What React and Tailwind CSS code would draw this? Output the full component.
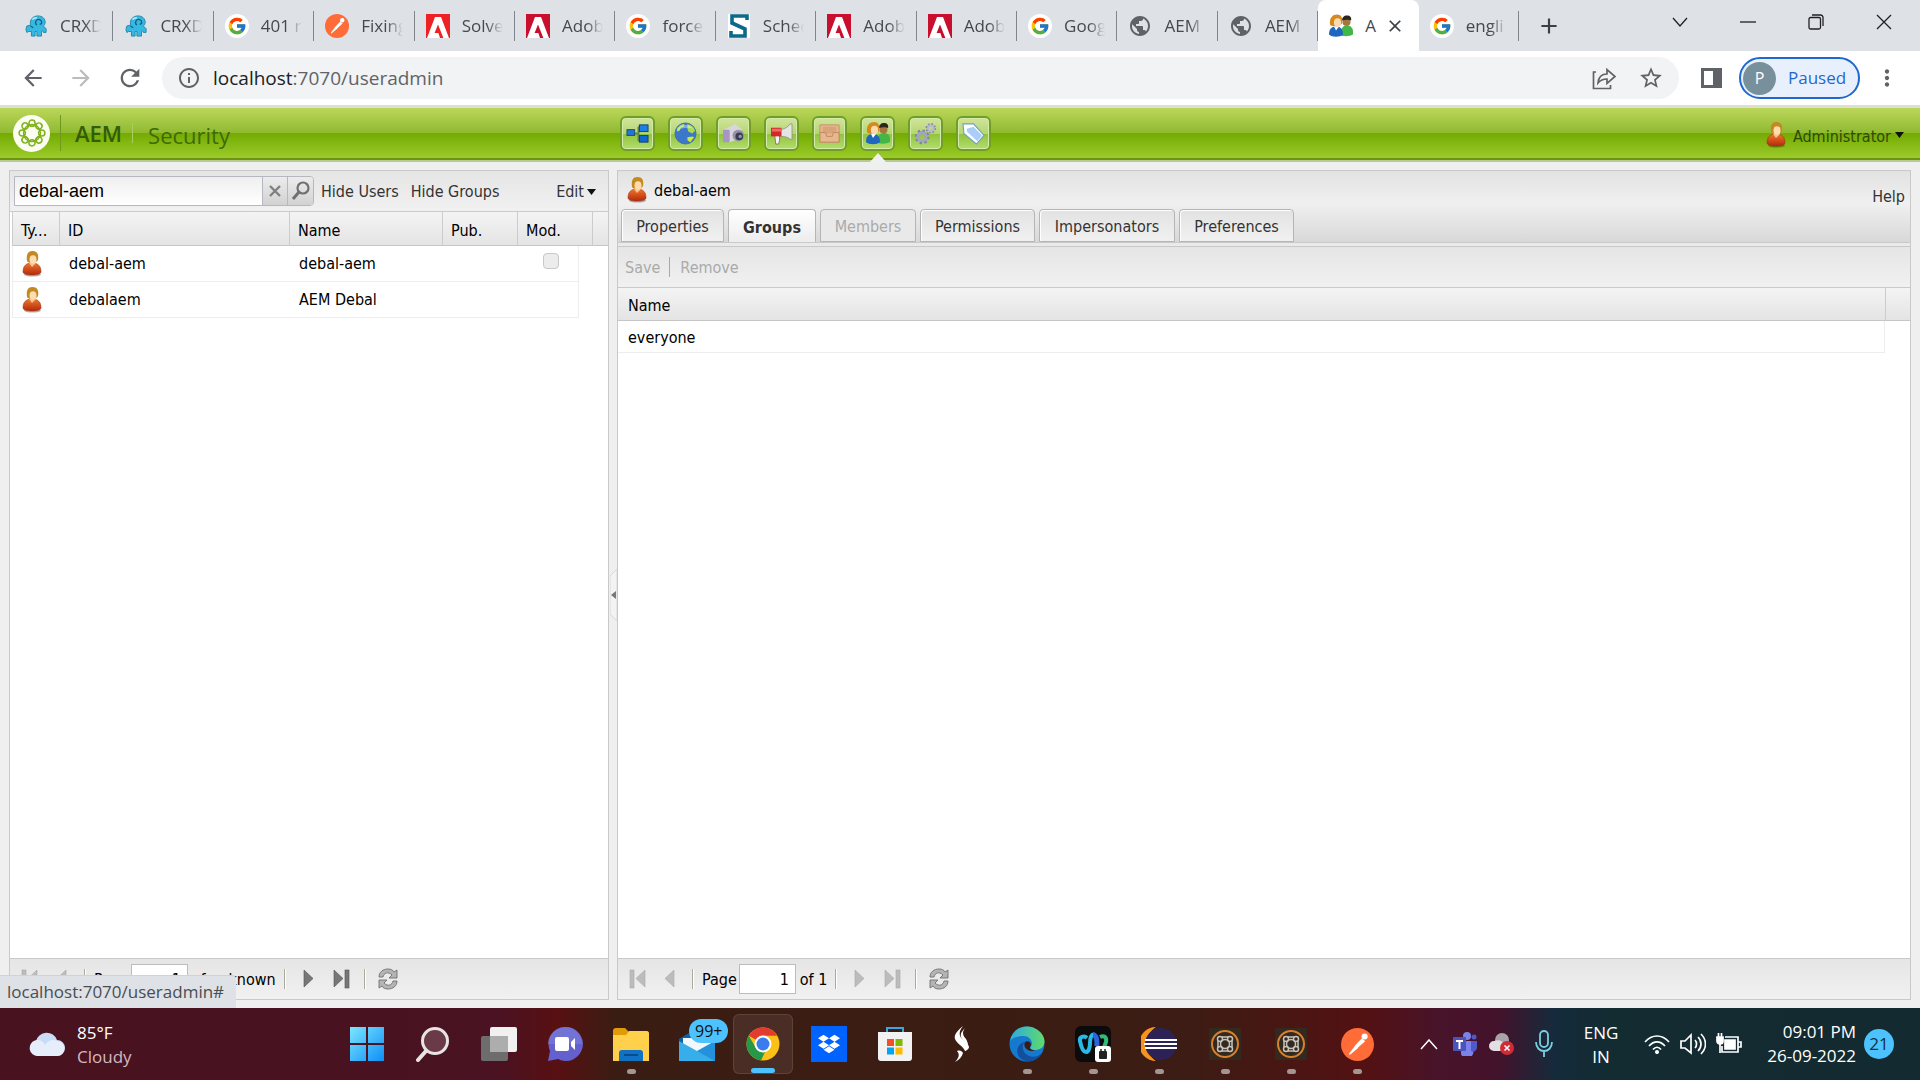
import React from 'react';
import { FcGoogle } from 'react-icons/fc';
import { MdPublic, MdArrowBack, MdArrowForward, MdRefresh, MdInfoOutline, MdStarBorder, MdMoreVert, MdAdd, MdClose } from 'react-icons/md';
import { SiDropbox } from 'react-icons/si';

/* ---------- favicons and shared icons ---------- */

const GoogleIcon = () => (
    <span className="w-6 h-6 rounded-full bg-white flex items-center justify-center">
        <FcGoogle size={20} />
    </span>
);

const CrxIcon = () => (
    <svg width="22" height="22" viewBox="0 0 24 24">
        <path d="M6 10C5 5 9 1 14 1c5 0 8 3 8 7 0 2-1 3-2 4l3 3v4h-3l-1-2-1 1v5h-5v-5h-2v5H7v-5H4l-2 1-1-3 1-4 4-1z" fill="#35b9e2" stroke="#1c86ab" strokeWidth="1" />
        <path d="M13 11c-3-2-1-7 3-6 3 1 3 5 0 5M6 12l3 2" fill="none" stroke="#135f80" strokeWidth="1.4" />
        <path d="M8 5c1-1 3-2 5-2" fill="none" stroke="#b9effc" strokeWidth="1.500" />
    </svg>
);

const PostmanIcon = ({ size = 24 }) => (
    <svg width={size} height={size} viewBox="0 0 24 24">
        <circle cx="12" cy="12" r="12" fill="#ff6c37" />
        <circle cx="17.2" cy="6.2" r="2.2" fill="#fff" />
        <path d="M15.2 7.4l2.4 2.2-5.2 5-5.6 4.6-1 .2.4-1.2 4.6-6z" fill="#fff" />
        <path d="M9.5 11.5l5.2-3.8M12.4 14.4l4.4-3.6" stroke="#ff6c37" strokeWidth=".5" />
    </svg>
);

const AdobeIcon = ({ color = '#c8102e' }) => (
    <svg width="24" height="24" viewBox="0 0 24 24">
        <rect width="24" height="24" fill={color} />
        <path d="M9 3h6l8 21h-5.6L12 10.5 8.6 19h3.8l1.6 5H1z" fill="#fff" />
    </svg>
);

const ScheduleIcon = () => (
    <svg width="22" height="24" viewBox="0 0 22 24">
        <rect width="22" height="24" fill="#fff" />
        <path d="M19 6V2H4v7l13 6v7H3v-5" fill="none" stroke="#0b6a88" strokeWidth="3.6" />
    </svg>
);

const GlobeIcon = () => <MdPublic size={26} color="#5f6368" />;

const PeopleIcon = ({ size = 25 }) => (
    <svg width={size} height={size} viewBox="0 0 24 24">
        <path d="M12 22v-4c0-3 2-6 6-6s6 3 6 6v3c-3 2-9 2-12 1z" fill="#43b649" />
        <circle cx="17.5" cy="8.500" r="4" fill="#a8763c" />
        <path d="M13 7c0-3 2-5 5-5s5 2 4 5c-2-1-6-1-9 0z" fill="#2b2620" />
        <path d="M0 21c0-5 2-8 7-8s7 3 7 8c-3 3-11 3-14 0z" fill="#1f66c1" />
        <path d="M5 13l2 4 3-4z" fill="#fff" />
        <path d="M1 11C0 4 4 1 8 1s6 3 5 9c-1 2-11 4-12 1z" fill="#d68a1e" />
        <ellipse cx="8.500" cy="9" rx="3.600" ry="4.300" fill="#ffd9ae" />
    </svg>
);

const UserIcon = () => (
    <svg width="20" height="26" viewBox="0 0 20 26">
        <defs>
            <linearGradient id="robe" x1="0" y1="0" x2="0" y2="1">
                <stop offset="0" stopColor="#f0762b" />
                <stop offset="1" stopColor="#b32a0c" />
            </linearGradient>
        </defs>
        <ellipse cx="10.500" cy="23.500" rx="8.500" ry="2" fill="#000" opacity=".3" />
        <path d="M1 21c0-6 3-9 9-9s9 3 9 9c0 4-18 4-18 0z" fill="url(#robe)" stroke="#a3330f" strokeWidth=".6" />
        <path d="M7 12l3 4 4-4-1-3H8z" fill="#f7c48d" />
        <path d="M5 10C4 3 6 0 10.500 0S17 3 16 9c-1 3-10 4-11 1z" fill="#c28a21" />
        <ellipse cx="11" cy="8.500" rx="3.500" ry="4.300" fill="#ffdcae" />
    </svg>
);

const Ring = ({ color, className }) => (
    <svg viewBox="0 0 36 36" className={className}>
        {[0, 45, 90, 135, 180, 225, 270, 315].map((a) => (
            <circle key={a} cx="18" cy="7" r="3.500" fill="none" stroke={color} strokeWidth="1.700" transform={`rotate(${a} 18 18)`} />
        ))}
        <circle cx="18" cy="18" r="9.500" fill="none" stroke={color} strokeWidth="1.700" />
    </svg>
);

const Caret = () => (
    <svg width="9" height="6" viewBox="0 0 9 6">
        <path d="M0 0h9L4.500 6z" fill="#111" />
    </svg>
);

/* ---------- browser chrome ---------- */

const tabs = [
    { title: 'CRXD', icon: <CrxIcon /> },
    { title: 'CRXD', icon: <CrxIcon /> },
    { title: '401 r', icon: <GoogleIcon /> },
    { title: 'Fixing', icon: <PostmanIcon /> },
    { title: 'Solve', icon: <AdobeIcon color="#ed2224" /> },
    { title: 'Adob', icon: <AdobeIcon /> },
    { title: 'force', icon: <GoogleIcon /> },
    { title: 'Sched', icon: <ScheduleIcon /> },
    { title: 'Adob', icon: <AdobeIcon /> },
    { title: 'Adob', icon: <AdobeIcon /> },
    { title: 'Goog', icon: <GoogleIcon /> },
    { title: 'AEM', icon: <GlobeIcon /> },
    { title: 'AEM', icon: <GlobeIcon /> },
    { title: 'A', icon: <PeopleIcon />, active: true },
    { title: 'engli', icon: <GoogleIcon /> },
];

const BrowserTab = ({ title, icon, active }) => (
    <div className={active ? 'flex-1 min-w-0 h-full flex items-center pl-[11px] bg-white rounded-t-lg' : 'flex-1 min-w-0 h-full flex items-center pl-[11px]'}>
        <span className="w-6 h-6 shrink-0 flex items-center justify-center">{icon}</span>
        <span className={active
            ? 'w-3 ml-3 shrink-0 overflow-hidden whitespace-nowrap text-[17px] text-[#45494d]'
            : 'flex-1 ml-3 mr-[11px] overflow-hidden whitespace-nowrap text-[17px] text-[#45494d] [mask-image:linear-gradient(to_right,black_60%,transparent)]'}
        >
            {title}
        </span>
        {active
            ? <button aria-label="Close tab" className="ml-2 text-[#3c4043]"><MdClose size={20} /></button>
            : <span className="w-px h-[30px] bg-[#80868b]"></span>}
    </div>
);

const TabStrip = () => (
    <div className="h-[51px] bg-[#dee1e6] flex items-center pl-[13px] pr-[2px]">
        <div className="flex-1 max-w-[1506px] h-full flex">
            {tabs.map((t, i) => <BrowserTab key={i} {...t} />)}
        </div>
        <button aria-label="New tab" className="ml-[17px] text-[#3c4043]"><MdAdd size={26} /></button>
        <div className="ml-auto self-start flex h-11 text-[#202124]">
            <button aria-label="Search tabs" className="w-[68px] flex items-center justify-center">
                <svg width="16" height="10" viewBox="0 0 16 10" fill="none" stroke="currentColor" strokeWidth="1.3"><path d="M1 1l7 8 7-8" /></svg>
            </button>
            <button aria-label="Minimize" className="w-[68px] flex items-center justify-center">
                <svg width="16" height="10" viewBox="0 0 16 10" stroke="currentColor" strokeWidth="1.3"><path d="M0 5h16" /></svg>
            </button>
            <button aria-label="Restore" className="w-[68px] flex items-center justify-center">
                <svg width="16" height="16" viewBox="0 0 16 16" fill="none" stroke="currentColor" strokeWidth="1.3">
                    <rect x="1" y="3.500" width="11.500" height="11.500" rx="1.500" />
                    <path d="M4 1h8.500A2.500 2.500 0 0 1 15 3.500V12" />
                </svg>
            </button>
            <button aria-label="Close" className="w-[68px] flex items-center justify-center">
                <svg width="16" height="16" viewBox="0 0 16 16" stroke="currentColor" strokeWidth="1.3"><path d="M1 1l14 14M15 1L1 15" /></svg>
            </button>
        </div>
    </div>
);

const AddressBar = () => (
    <div className="h-[54px] bg-white flex items-center pl-5 pr-5 text-[#5f6368]">
        <button aria-label="Back"><MdArrowBack size={26} /></button>
        <button aria-label="Forward" className="ml-[22px] text-[#babcbe]"><MdArrowForward size={26} /></button>
        <button aria-label="Reload" className="ml-[22px]"><MdRefresh size={28} /></button>
        <div className="ml-[18px] flex-1 h-[42px] rounded-full bg-[#f1f3f4] flex items-center pl-[15px] pr-[15px]">
            <MdInfoOutline size={24} />
            <div className="flex-1 ml-3 text-[19px]"><span className="text-[#202124]">localhost</span>:7070/useradmin</div>
            <button aria-label="Share">
                <svg width="24" height="24" viewBox="0 0 24 24" fill="none" stroke="currentColor" strokeWidth="1.700">
                    <path d="M4 6H1.500v16.500h17V19" />
                    <path d="M6 17c.5-6 4-9 9-9V3.500l8 7-8 7V13c-4 0-6.500 1-9 4z" />
                </svg>
            </button>
            <button aria-label="Bookmark" className="ml-[22px]"><MdStarBorder size={26} /></button>
        </div>
        <button aria-label="Side panel" className="ml-[22px]">
            <svg width="21" height="20" viewBox="0 0 21 20"><path d="M0 0h21v20H0zM3 3v14h9V3z" fill="#5f6368" fillRule="evenodd" /></svg>
        </button>
        <button className="ml-[17px] w-[121px] h-[42px] rounded-full border-2 border-[#1f68cf] bg-[#e9f0fd] flex items-center pl-[2px] text-[17px] text-[#1f68cf]">
            <span className="w-[33px] h-[33px] rounded-full bg-[#78909c] text-white text-base flex items-center justify-center">P</span>
            <span className="ml-3">Paused</span>
        </button>
        <button aria-label="Menu" className="ml-[14px]"><MdMoreVert size={26} /></button>
    </div>
);

/* ---------- AEM header ---------- */

const modules = [
    {
        name: 'Websites',
        icon: (
            <>
                <path d="M8 12h5M13 5h3M13 5v14h3" stroke="#5d8650" strokeWidth="2" fill="none" />
                <rect x="1" y="8" width="8" height="6" fill="#2277d3" stroke="#214a79" />
                <rect x="14" y="3" width="9" height="7" fill="#1c80e8" stroke="#183f70" />
                <rect x="14" y="14" width="9" height="7" fill="#1068ce" stroke="#183f70" />
            </>
        ),
    },
    {
        name: 'Sites',
        icon: (
            <>
                <circle cx="12" cy="12" r="11" fill="#3b78c9" stroke="#4a6f9b" />
                <path d="M3 7c2-3 5-5 8-5l-1 3-3 1-1 3-3 1zM14 2c4 1 7 3 8 7l-3 3-4-2-1-3z" fill="#a9dc55" />
                <path d="M14 16l5-1 2 1-4 5-3-2z" fill="#c6ea3e" />
                <path d="M3 9c4-8 13-7 17-2-6-2-12-1-17 2z" fill="#fff" opacity=".4" />
            </>
        ),
    },
    {
        name: 'Digital Assets',
        icon: (
            <>
                <path d="M1 8l7-3 6-3 6 5v10l-12 4-7-1z" fill="#d9d5de" />
                <rect x="1" y="8" width="7" height="13" rx="1" fill="#a596c6" />
                <circle cx="17" cy="14" r="6" fill="#9495a4" />
                <circle cx="18" cy="15" r="4" fill="#3b3d55" />
                <circle cx="19" cy="15" r="1.800" fill="#8f98c3" />
            </>
        ),
    },
    {
        name: 'Campaigns',
        icon: (
            <>
                <path d="M5 14h5v5l-1 4H6z" fill="#f4f4f4" stroke="#86603b" strokeWidth=".8" />
                <path d="M11 8c5-1 8-3 10-6h2v16h-2c-2-2-5-3-10-3z" fill="#e4e4e2" stroke="#8a8a84" strokeWidth=".8" />
                <path d="M1 6h11v9H1z" fill="#cf2a2a" />
                <path d="M2 7h10v3H2z" fill="#ef6b62" />
            </>
        ),
    },
    {
        name: 'Inbox',
        icon: (
            <>
                <path d="M2 3h20v18H2z" fill="#e8b48c" stroke="#c19468" />
                <path d="M5 5h14v7H5z" fill="#dba37a" />
                <path d="M2 11h6l1 4h6l1-4h6v10H2z" fill="#eab68f" stroke="#b98d5b" />
            </>
        ),
    },
    { name: 'Users', active: true },
    {
        name: 'Tools',
        icon: (
            <g fill="none" stroke="#8484a8">
                <circle cx="8.500" cy="15.500" r="4.500" strokeWidth="3.500" stroke="#a3a3c3" />
                <circle cx="8.500" cy="15.500" r="6.700" strokeWidth="2" strokeDasharray="2.600 2.600" />
                <circle cx="17.500" cy="6.500" r="3" strokeWidth="2.500" stroke="#b7b7d2" />
                <circle cx="17.500" cy="6.500" r="4.700" strokeWidth="1.600" strokeDasharray="1.800 1.900" />
            </g>
        ),
    },
    {
        name: 'Tagging',
        icon: (
            <>
                <path d="M1 2h11l11 12-8 9L2 12z" fill="#fff" stroke="#6f9fca" strokeWidth="1.200" />
                <path d="M5 7l7-2 9 9-5 6L5 10z" fill="#a9cdf4" />
            </>
        ),
    },
];

const AemHeader = () => (
    <header className="shrink-0 border-t-[3px] border-[#dbe0d2]">
        <div className="h-[52px] border-b-2 border-[#6d9310] bg-[linear-gradient(to_bottom,#bcd65a_0%,#8fba30_50%,#74aa02_50%,#9bcb2a_100%)] flex items-center pl-[13px] pr-4">
            <div className="w-[607px] shrink-0 flex items-center">
                <span className="w-[37px] h-[37px] rounded-full bg-[#fafdf0] flex items-center justify-center">
                    <Ring color="#7fb21b" className="w-8 h-8" />
                </span>
                <span className="ml-[10px] w-px h-9 bg-[#6d9a1d]"></span>
                <span className="ml-[14px] text-[22px] font-semibold text-[#355c06]">AEM</span>
                <span className="ml-[10px] w-px h-5 bg-[#a7cf5c]"></span>
                <h1 className="ml-[15px] pt-1 text-[22px] text-[#3e6a07]">Security</h1>
            </div>
            <nav className="flex gap-[13px]">
                {modules.map((m) => (
                    <button key={m.name} aria-label={m.name} className="relative w-[35px] h-[35px] rounded-md border-2 border-[#6f9f2a] bg-[linear-gradient(to_bottom,#d0e59c_0%,#b5d672_50%,#8fc33c_50%,#b3dd6d_100%)] shadow-[inset_0_0_0_1px_#d5eba6] flex items-center justify-center">
                        {m.active ? <PeopleIcon size={24} /> : <svg width="23" height="23" viewBox="0 0 24 24">{m.icon}</svg>}
                        {m.active && (
                            <svg width="16" height="9" viewBox="0 0 16 9" className="absolute top-[35px] left-2"><path d="M8 0l8 9H0z" fill="#f0f0f0" /></svg>
                        )}
                    </button>
                ))}
            </nav>
            <button className="ml-auto pt-1 flex items-center text-base text-[#2d4a08] font-['DejaVu_Sans_Condensed','Liberation_Sans',sans-serif]">
                <UserIcon />
                <span className="ml-[7px] mr-1 pt-[3px]">Administrator</span>
                <Caret />
            </button>
        </div>
        <div className="h-[2px] bg-[#b7cb90]"></div>
    </header>
);

/* ---------- panels ---------- */

const Sep = () => <span className="w-[2px] h-5 border-l border-[#a9ab9b] bg-white"></span>;

const PageIcon = ({ kind, off }) => (
    <svg width="20" height="20" viewBox="0 0 20 20" fill={off ? '#bcbcbc' : '#777'} stroke={off ? '#a9a9a9' : '#555'} strokeWidth=".6">
        {kind === 'first' && <><rect x="2" y="1" width="4" height="18" /><path d="M17 1v17L8 9.500z" /></>}
        {kind === 'prev' && <path d="M14 1v17L5 9.500z" />}
        {kind === 'next' && <path d="M6 1v17l9-8.500z" />}
        {kind === 'last' && <><path d="M2 1v17l9-8.500z" /><rect x="13" y="1" width="4" height="18" /></>}
    </svg>
);

const RefreshIcon = () => (
    <svg width="22" height="22" viewBox="0 0 22 22" fill="#b4b4b4" stroke="#707070" strokeWidth=".9">
        <path d="M2 9c0-5 4-8 9-8 3 0 5 1 6 3l3-2v8h-8l3-3c-4-4-8-2-9 2z" />
        <path d="M20 13c0 5-4 8-9 8-3 0-5-1-6-3l-3 2v-8h8l-3 3c4 4 8 2 9-2z" />
    </svg>
);

const Pager = ({ id, total, more }) => (
    <div className="h-[41px] shrink-0 border-t border-[#cacaca] bg-gradient-to-b from-[#e5e5e5] to-[#f1f1f1] flex items-center pl-[10px]">
        <button aria-label="First page" disabled><PageIcon kind="first" off /></button>
        <button aria-label="Previous page" className="ml-3 mr-3" disabled><PageIcon kind="prev" off /></button>
        <Sep />
        <label htmlFor={id} className="ml-2 pt-[2px]">Page</label>
        <input id={id} type="text" defaultValue="1" className="w-[57px] h-[30px] ml-[2px] mr-1 px-[6px] border border-[#bcbcbc] bg-white text-right" />
        <span className="mr-2 pt-[2px] whitespace-nowrap">of {total}</span>
        <Sep />
        <button aria-label="Next page" className="ml-3" disabled={!more}><PageIcon kind="next" off={!more} /></button>
        <button aria-label="Last page" className="ml-[14px] mr-3" disabled={!more}><PageIcon kind="last" off={!more} /></button>
        <Sep />
        <button aria-label="Refresh" className="ml-[11px]"><RefreshIcon /></button>
    </div>
);

const users = [
    { id: 'debal-aem', name: 'debal-aem', modified: true },
    { id: 'debalaem', name: 'AEM Debal', modified: false },
];

const headCell = 'pl-2 pt-1 text-left font-normal border-b border-[#c6c6c6] border-l border-l-[#cccccc] bg-gradient-to-b from-[#f4f4f4] to-[#e4e4e4]';

const UserList = () => (
    <section className="w-[600px] shrink-0 bg-white border border-[#c9c9c9] flex flex-col">
        <div className="h-[41px] shrink-0 border-b border-[#cacaca] bg-gradient-to-b from-[#e5e5e5] to-[#f1f1f1] flex items-center pl-1 pr-3 text-[#333]">
            <div className="w-[300px] h-[30px] border border-[#b5b8bf] rounded-r flex overflow-hidden">
                <input type="text" aria-label="Search" defaultValue="debal-aem" className="flex-1 min-w-0 px-1 bg-gradient-to-b from-[#efefef] to-white text-[18px] text-black font-['Liberation_Sans',sans-serif]" />
                <button aria-label="Clear" className="w-[25px] bg-gradient-to-b from-[#ececec] to-[#d2d2d2] border-l border-[#b5b8bf] flex items-center justify-center">
                    <svg width="12" height="12" viewBox="0 0 12 12" stroke="#808080" strokeWidth="2.400"><path d="M1 1l10 10M11 1L1 11" /></svg>
                </button>
                <button aria-label="Find" className="w-[26px] bg-gradient-to-b from-[#ececec] to-[#d2d2d2] border-l border-[#b5b8bf] flex items-center justify-center">
                    <svg width="20" height="20" viewBox="0 0 20 20" fill="none" stroke="#707070"><circle cx="12" cy="7" r="5.500" strokeWidth="2.200" /><path d="M8 11l-6 7" strokeWidth="3" /></svg>
                </button>
            </div>
            <button className="ml-[7px] pt-[2px]">Hide Users</button>
            <button className="ml-3 pt-[2px]">Hide Groups</button>
            <button className="ml-auto pt-[2px] flex items-center gap-[3px]">Edit <Caret /></button>
        </div>
        <div className="flex-1 pl-[2px]">
            <table className="w-full table-fixed border-separate border-spacing-0">
                <colgroup>
                    <col className="w-[47px]" />
                    <col className="w-[230px]" />
                    <col className="w-[153px]" />
                    <col className="w-[75px]" />
                    <col className="w-[62px]" />
                    <col className="w-[13px]" />
                    <col />
                </colgroup>
                <thead>
                    <tr className="h-[34px]">
                        <th className={headCell}>Ty...</th>
                        <th className={headCell}>ID</th>
                        <th className={headCell}>Name</th>
                        <th className={headCell}>Pub.</th>
                        <th className={headCell} colSpan={2}>Mod.</th>
                        <th className={headCell}></th>
                    </tr>
                </thead>
                <tbody>
                    {users.map((u) => (
                        <tr key={u.id} className="h-9">
                            <td className="pl-[9px] border-b border-l border-[#ededed]"><UserIcon /></td>
                            <td className="pl-[10px] border-b border-[#ededed]">{u.id}</td>
                            <td className="pl-[10px] border-b border-[#ededed]">{u.name}</td>
                            <td className="border-b border-[#ededed]"></td>
                            <td className="pl-[26px] pt-[7px] align-top border-b border-r border-[#ededed]">
                                {u.modified && <input type="checkbox" aria-label="Modified" disabled className="block appearance-none w-4 h-4 rounded-sm border border-[#c8c8c8] bg-[#ececec]" />}
                            </td>
                        </tr>
                    ))}
                </tbody>
            </table>
        </div>
        <Pager id="users-page" total="unknown" more />
    </section>
);

const groupTabs = [
    { label: 'Properties', cls: 'w-[103px]' },
    { label: 'Groups', cls: 'w-[88px]', state: 'active' },
    { label: 'Members', cls: 'w-[96px]', state: 'off' },
    { label: 'Permissions', cls: 'w-[115px]' },
    { label: 'Impersonators', cls: 'w-[136px]' },
    { label: 'Preferences', cls: 'w-[115px]' },
];

const tabLook = {
    active: 'h-[34px] bg-gradient-to-b from-white to-[#ececec] font-bold text-[#333]',
    off: 'h-[33px] border-b bg-[#e9e9e9] text-[#aaa]',
    normal: 'h-[33px] border-b bg-gradient-to-b from-[#e2e2e2] to-[#f1f1f1] text-[#333] shadow-[inset_1px_1px_0_white]',
};

const UserDetail = () => (
    <section className="flex-1 min-w-0 bg-white border border-[#c9c9c9] flex flex-col">
        <div className="h-[71px] shrink-0 bg-[linear-gradient(to_bottom,#e2e2e2_0%,#f0f0f0_45%,#d8d8d8_100%)] flex justify-between">
            <div className="flex flex-col justify-between pl-[3px]">
                <div className="flex items-center pl-[6px] pt-[6px]">
                    <UserIcon />
                    <h2 className="ml-[7px] pt-[2px]">debal-aem</h2>
                </div>
                <div role="tablist" className="flex gap-1 h-[33px]">
                    {groupTabs.map((t) => (
                        <button key={t.label} role="tab" aria-selected={t.state === 'active'} disabled={t.state === 'off'} className={`${t.cls} ${tabLook[t.state || 'normal']} pt-[2px] border-t border-l border-r border-[#b5b5b5] rounded-t`}>
                            {t.label}
                        </button>
                    ))}
                </div>
            </div>
            <a href="#help" className="self-start mt-[14px] mr-[5px] text-[#333]">Help</a>
        </div>
        <div className="h-[5px] shrink-0 border-y border-[#c9c9c9] bg-[#eaeaea]"></div>
        <div className="h-[41px] shrink-0 border-b border-[#cacaca] bg-gradient-to-b from-[#e5e5e5] to-[#f1f1f1] flex items-center pl-[7px] text-[#aaa]">
            <button className="pt-[2px]" disabled>Save</button>
            <span className="ml-[9px] mr-[10px] w-px h-5 bg-[#a9ab9b]"></span>
            <button className="pt-[2px]" disabled>Remove</button>
        </div>
        <div className="flex-1">
            <table className="w-full table-fixed border-separate border-spacing-0">
                <colgroup>
                    <col />
                    <col className="w-[25px]" />
                </colgroup>
                <thead>
                    <tr className="h-[33px]">
                        <th className="pl-[10px] pt-1 text-left font-normal border-b border-[#c6c6c6] bg-gradient-to-b from-[#f4f4f4] to-[#e4e4e4]">Name</th>
                        <th className={headCell}></th>
                    </tr>
                </thead>
                <tbody>
                    <tr className="h-8">
                        <td className="pl-[10px] pt-[2px] border-b border-r border-[#ededed]">everyone</td>
                    </tr>
                </tbody>
            </table>
        </div>
        <Pager id="groups-page" total="1" />
    </section>
);

/* ---------- taskbar ---------- */

const apps = [
    {
        name: 'Start',
        icon: <path d="M1 1h16v16H1zM19 1h16v16H19zM1 19h16v16H1zM19 19h16v16H19z" fill="url(#win)" />,
    },
    {
        name: 'Search',
        icon: (
            <>
                <circle cx="20" cy="15" r="12.500" fill="#6b3a48" stroke="#e9e4e4" strokeWidth="3" />
                <path d="M11 25l-8 9" stroke="#e9e4e4" strokeWidth="4" strokeLinecap="round" />
            </>
        ),
    },
    {
        name: 'Task view',
        icon: (
            <>
                <rect x="0" y="10" width="27" height="25" rx="2" fill="#6d6d6d" />
                <rect x="9" y="1" width="27" height="25" rx="2" fill="#f1f1f1" />
                <path d="M9 10h18v16H9z" fill="#adadad" />
            </>
        ),
    },
    {
        name: 'Chat',
        icon: (
            <>
                <path d="M18 1a17 17 0 1 1-7 32L1 35l2-10A17 17 0 0 1 18 1z" fill="#6461ce" />
                <path d="M18 1a17 17 0 0 1 17 17H1A17 17 0 0 1 18 1z" fill="#8183dc" opacity=".5" />
                <rect x="8" y="11" width="14" height="14" rx="2" fill="#fff" />
                <path d="M24 16l4-4v12l-4-4z" fill="#fff" />
            </>
        ),
    },
    {
        name: 'File Explorer',
        running: true,
        icon: (
            <>
                <path d="M0 5c0-2 1-3 3-3h9l4 4-2 5H0z" fill="#e09b07" />
                <path d="M0 9h13l3-4h18c1 0 2 1 2 2v28H0z" fill="#ffd04c" />
                <path d="M6 35V27c0-2 1-3 3-3h18c2 0 3 1 3 3v8z" fill="#0f72c4" />
                <path d="M11 29h14" stroke="#0a4c8b" strokeWidth="2" />
            </>
        ),
    },
    {
        name: 'Mail',
        badge: '99+',
        icon: (
            <>
                <path d="M0 13L18 2l18 11v22H0z" fill="#0f5fa8" />
                <path d="M4 12h28v9L18 29 4 21z" fill="#f2f7fc" />
                <path d="M36 15v20H0z" fill="#2391dc" />
                <path d="M0 15l36 20H0z" fill="#35aee9" />
            </>
        ),
    },
    {
        name: 'Chrome',
        active: true,
        icon: (
            <>
                <circle cx="18" cy="18" r="16.500" fill="#fbc116" />
                <path d="M3.700 9.700A16.500 16.500 0 0 1 32.300 9.700H18a8.300 8.300 0 0 0-7 4z" fill="#e33b2e" />
                <path d="M3.700 9.700L11 22a8.300 8.300 0 0 0 9 4l-4 8.400A16.500 16.500 0 0 1 3.700 9.700z" fill="#279847" />
                <circle cx="18" cy="18" r="8.500" fill="#fff" />
                <circle cx="18" cy="18" r="6.500" fill="#3b7cec" />
            </>
        ),
    },
    { name: 'Dropbox', node: <span className="w-9 h-9 bg-[#0062ff] text-white flex items-center justify-center"><SiDropbox size={22} /></span> },
    {
        name: 'Store',
        icon: (
            <>
                <path d="M10 8V2h16v6" fill="none" stroke="#3aa7e0" strokeWidth="2" />
                <path d="M1 6h34v26a3 3 0 0 1-3 3H4a3 3 0 0 1-3-3z" fill="#f2f2f2" />
                <rect x="10" y="13" width="7" height="7" fill="#f25022" />
                <rect x="18.500" y="13" width="7" height="7" fill="#7fba00" />
                <rect x="10" y="21.500" width="7" height="7" fill="#00a4ef" />
                <rect x="18.500" y="21.500" width="7" height="7" fill="#ffb900" />
            </>
        ),
    },
    {
        name: 'Shadow',
        icon: (
            <>
                <path d="M20 0c-7 6-9 9-8 13 2 5 8 7 10 12 1 0 4-2 4-4-1-5-7-7-9-11-1-4 0-6 3-10z" fill="#fff" />
                <path d="M23 1c-4 4-4 8 0 12 1 2 2 4 2 6-2-3-6-5-7-8-1-4 2-7 5-10zM12 36c4-4 5-8 2-11 3-1 5 0 6 2-1 4-4 7-8 9z" fill="#fff" />
            </>
        ),
    },
    {
        name: 'Edge',
        running: true,
        icon: (
            <>
                <circle cx="18" cy="18" r="17.500" fill="#1479cf" />
                <path d="M1 15C3 5 10 .5 18 .5S36 7 35.500 16c-.5 6-5 8-10 8-3 0-5-1-4-3 4-5-1-11-7-11-6 0-11 2-13.500 5z" fill="url(#edge)" />
                <path d="M16 16c-4 3-3 11 4 14 5 2 10 0 13-3-4 8-14 11-22 5-5-6-3-14 5-16z" fill="#11509e" />
                <path d="M16 16c3-2 6 0 6 3-2 3-1 5 4 5-5 3-13-2-10-8z" fill="#3a1c14" />
            </>
        ),
    },
    {
        name: 'Webex',
        running: true,
        icon: (
            <>
                <rect x="0" y="0" width="36" height="36" rx="6" fill="#0b0b0c" />
                <path d="M20 9c-4-2-5 4-5 8 0 6-2 9-4 9-3 0-5-6-6-11-1-4 4-6 7-3" fill="none" stroke="#29b9e6" strokeWidth="4" />
                <path d="M18 9c4 0 4 6 4 11" fill="none" stroke="#2d63e0" strokeWidth="5" />
                <path d="M25 11c4-2 7 0 6 5-1 3-2 6-4 8" fill="none" stroke="#33b978" strokeWidth="4" />
                <rect x="20" y="20" width="16" height="16" rx="3" fill="#fff" />
                <rect x="24" y="25" width="8" height="8" rx="1" fill="#222" />
                <path d="M26 23v3M30 23v3" stroke="#222" strokeWidth="1.500" />
            </>
        ),
    },
    {
        name: 'Eclipse',
        running: true,
        icon: (
            <>
                <path d="M15 1a17 17 0 0 0 0 34A20 20 0 0 1 15 1z" fill="#f7941e" />
                <circle cx="20" cy="18" r="16" fill="#2c2255" />
                <path d="M4 14h32M3 18h33M4 22h32" stroke="#fff" strokeWidth="1.800" />
            </>
        ),
    },
    { name: 'AEM Author', running: true, aem: true },
    { name: 'AEM Publish', running: true, aem: true },
    { name: 'Postman', running: true, node: <PostmanIcon size={33} /> },
];

const AemAppIcon = () => (
    <span className="w-8 h-8 bg-[#33291f] flex items-center justify-center">
        <span className="w-7 h-7 rounded-full border-2 border-[#d9802a] flex items-center justify-center">
            <svg width="18" height="18" viewBox="0 0 18 18" fill="none" stroke="#c9c2ba" strokeWidth="1.500">
                <circle cx="9" cy="9" r="4.500" />
                <circle cx="4" cy="4" r="2.500" />
                <circle cx="14" cy="4" r="2.500" />
                <circle cx="4" cy="14" r="2.500" />
                <circle cx="14" cy="14" r="2.500" />
                <path d="M6 2h6M6 16h6M2 6v6M16 6v6" />
            </svg>
        </span>
    </span>
);

const AppButton = ({ name, icon, node, aem, badge, active, running }) => (
    <button aria-label={name} className={active
        ? 'relative w-[60px] h-[60px] rounded-md bg-white/8 border border-white/10 flex items-center justify-center'
        : 'relative w-[60px] h-[60px] flex items-center justify-center'}
    >
        {aem ? <AemAppIcon /> : node || <svg width="36" height="36" viewBox="0 0 36 36">{icon}</svg>}
        {badge && <span className="absolute top-[5px] left-[22px] h-6 px-[6px] rounded-full bg-[#4cc2ff] text-[#111] text-base leading-6">{badge}</span>}
        {running && <span className="absolute bottom-0 left-[26px] w-[9px] h-[5px] rounded-full bg-[#a39692]"></span>}
        {active && <span className="absolute bottom-0 left-[17px] w-6 h-[5px] rounded-full bg-[#4cc2ff]"></span>}
    </button>
);

const Taskbar = () => (
    <footer className="h-[72px] shrink-0 flex items-center pl-[28px] pr-[26px] text-white text-[17px] leading-6 bg-[linear-gradient(to_right,#48121f_0%,#4a1222_26%,#581012_29%,#3a1d12_32%,#3c1c14_62%,#531112_71%,#48142a_75%,#43122b_78%,#152b3c_81%,#132c31_84%,#132b30_100%)]">
        <div className="w-[309px] shrink-0 flex items-center">
            <svg width="38" height="26" viewBox="0 0 38 26">
                <path d="M9 25a8 8 0 0 1-1-15A11 11 0 0 1 29 9a8 8 0 0 1 0 16z" fill="#c9dbf6" />
                <path d="M10 25a8 8 0 1 1 7-11 9 9 0 0 1 12-4 7.500 7.500 0 0 1 0 15z" fill="#e6eefb" />
            </svg>
            <div className="ml-[11px] pt-[2px]">
                <div>85°F</div>
                <div className="text-[#d4b9c0]">Cloudy</div>
            </div>
        </div>
        <svg width="0" height="0">
            <defs>
                <linearGradient id="win" x1="0" y1="0" x2="1" y2="1"><stop offset="0" stopColor="#7be6ff" /><stop offset="1" stopColor="#0f8ff5" /></linearGradient>
                <linearGradient id="edge" x1="0" y1="0" x2="1" y2="0"><stop offset="0" stopColor="#2ea8e0" /><stop offset="1" stopColor="#5fdc6c" /></linearGradient>
            </defs>
        </svg>
        <nav className="flex gap-[6px]">
            {apps.map((a) => <AppButton key={a.name} {...a} />)}
        </nav>
        <div className="flex-1 flex items-center justify-end">
            <svg width="18" height="11" viewBox="0 0 18 11" fill="none" stroke="#fff" strokeWidth="1.500"><path d="M1 10l8-9 8 9" /></svg>
            <svg width="24" height="24" viewBox="0 0 24 24" className="ml-[15px]">
                <circle cx="14" cy="4" r="4" fill="#7b83eb" />
                <circle cx="21" cy="5" r="2.500" fill="#5059c9" />
                <path d="M8 9h12v9a6 6 0 0 1-12 4z" fill="#7b83eb" />
                <path d="M18 9h6v7a4 4 0 0 1-6 3z" fill="#5059c9" />
                <rect x="0" y="5" width="13" height="14" rx="1" fill="#4b53bc" />
                <path d="M3 9h7M6.500 9v8" stroke="#fff" strokeWidth="2" />
            </svg>
            <svg width="26" height="24" viewBox="0 0 26 24" className="ml-3">
                <circle cx="13" cy="8" r="7" fill="#a9a2a8" />
                <path d="M5 19a5 5 0 0 1 0-10c5-2 9 0 10 4v6z" fill="#e2dfe2" />
                <circle cx="18" cy="16" r="7" fill="#d12b35" />
                <path d="M15.500 13.500l5 5M20.500 13.500l-5 5" stroke="#fff" strokeWidth="1.500" />
            </svg>
            <svg width="18" height="28" viewBox="0 0 18 28" className="ml-5" fill="none" stroke="#79cfe2" strokeWidth="1.800">
                <rect x="5" y="1" width="8" height="16" rx="4" />
                <path d="M1 12c0 12 16 12 16 0M9 21v6" />
            </svg>
            <div className="ml-[31px] pt-[2px] text-center">
                <div>ENG</div>
                <div>IN</div>
            </div>
            <svg width="26" height="20" viewBox="0 0 26 20" className="ml-[26px]" fill="none" stroke="#fff" strokeWidth="1.700">
                <path d="M1 8c7-8 17-8 24 0M5 12c5-5.500 11-5.500 16 0M9 15.500c2.500-3 5.500-3 8 0" />
                <circle cx="13" cy="18" r="1.200" fill="#fff" />
            </svg>
            <svg width="26" height="22" viewBox="0 0 26 22" className="ml-[10px]" fill="none" stroke="#fff" strokeWidth="1.700">
                <path d="M1 8h4l6-6v18l-6-5H1zM15 7c2 2 2 6 0 8M18 4c4 4 4 10 0 14M21 1c6 6 6 14 0 20" />
            </svg>
            <svg width="26" height="22" viewBox="0 0 26 22" className="ml-[10px]" fill="none" stroke="#fff" strokeWidth="1.700">
                <path d="M9 4h13v15H6v-6M22 9h3v5h-3" />
                <path d="M9 7h10v9H9z" fill="#fff" />
                <path d="M1 4h6v4a3 3 0 0 1-6 0zM2.500 4V0M5.500 4V0" fill="#fff" />
                <path d="M4 11v9" />
            </svg>
            <div className="ml-[25px] text-right whitespace-nowrap">
                <div>09:01 PM</div>
                <div>26-09-2022</div>
            </div>
            <span className="ml-2 w-[30px] h-[30px] shrink-0 rounded-full bg-[#4cc2ff] text-[#12303f] flex items-center justify-center">21</span>
        </div>
    </footer>
);

export default function App() {
    return (
        <div className="h-screen flex flex-col overflow-hidden font-['Open_Sans','Noto_Sans',sans-serif]">
            <TabStrip />
            <AddressBar />
            <AemHeader />
            <main className="relative flex-1 min-h-0 flex px-[9px] py-2 bg-[#efefef] text-base text-black font-['DejaVu_Sans_Condensed','Liberation_Sans',sans-serif]">
                <UserList />
                <div className="w-2 shrink-0 flex items-center justify-center pt-5">
                    <button aria-label="Collapse" className="w-[7px] h-[52px]">
                        <svg width="7" height="52" viewBox="0 0 7 52">
                            <path d="M7 0L0 7v38l7 7z" fill="#f3f3f3" stroke="#d8d8d8" />
                            <path d="M6 22v8l-5-4z" fill="#777" />
                        </svg>
                    </button>
                </div>
                <UserDetail />
                {/* link target shown on hover */}
                <div className="absolute left-0 bottom-0 h-[33px] pl-[7px] pr-3 rounded-tr bg-[#dee1e6] border-t border-[#cfd2d6] text-[17px] leading-8 text-[#4a4d51] font-['Open_Sans','Noto_Sans',sans-serif]">
                    localhost:7070/useradmin#
                </div>
            </main>
            <Taskbar />
        </div>
    );
}
